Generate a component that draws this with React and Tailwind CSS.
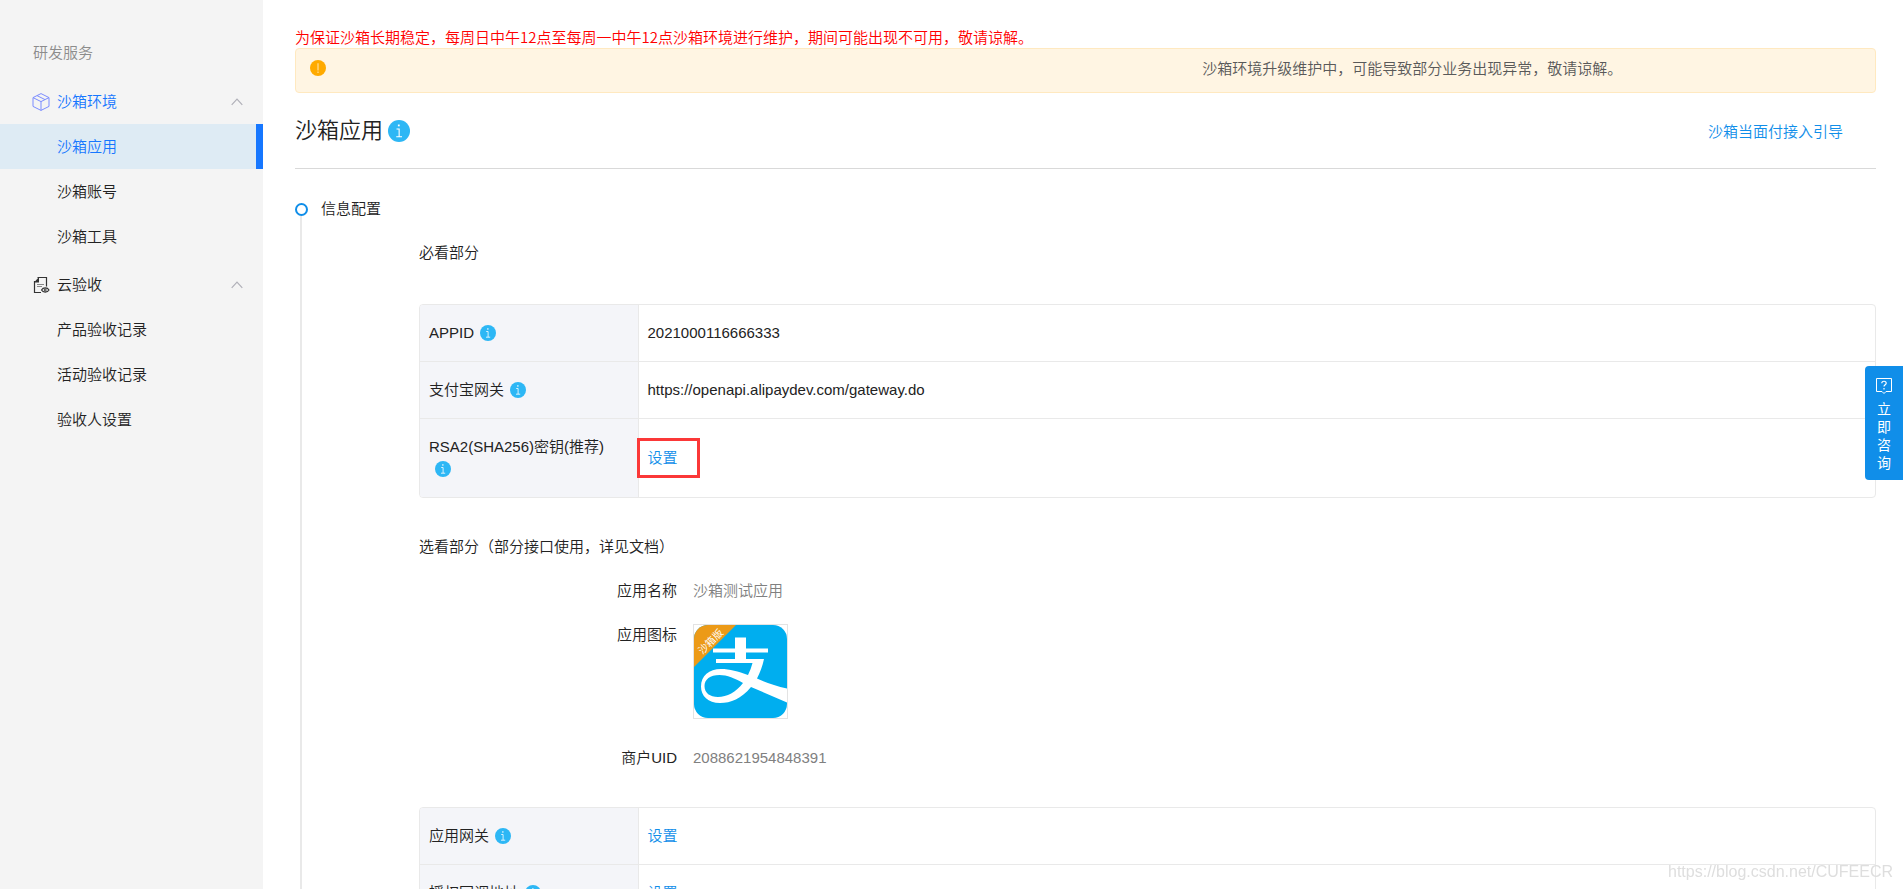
import React from "react";

const cx = (...names) => names.filter(Boolean).join(" ");

function InfoIcon({ className }) {
  return (
    <svg viewBox="0 0 16 16" className={className} aria-hidden="true">
      <circle cx="8" cy="8" r="8" fill="#2db7f5" />
      <rect x="7.2" y="3.3" width="1.3" height="1.3" fill="#fff" />
      <path d="M6.2 6.5h1.9v5.6M6 12.2h4.2" fill="none" stroke="#fff" strokeWidth="0.8" />
    </svg>
  );
}

function WarnIcon() {
  return (
    <svg viewBox="0 0 16 16" className="size-4 shrink-0" aria-hidden="true">
      <circle cx="8" cy="8" r="8" fill="#ffaa00" />
      <path d="M8 3.2v7.2M8 11.6v1.4" fill="none" stroke="#ffe3a8" strokeWidth="1.1" />
    </svg>
  );
}

function BoxIcon() {
  return (
    <svg viewBox="0 0 18 18" className="size-[18px]" fill="none" stroke="#7b8cff" strokeWidth="1" strokeLinejoin="round" aria-hidden="true">
      <path d="M9 0.6L17 4.6V13.4L9 17.4L1 13.4V4.6Z" />
      <path d="M1 4.6L9 8.6L17 4.6M9 8.6V17.4M5 2.6L13 6.6" />
    </svg>
  );
}

function FileIcon() {
  return (
    <svg viewBox="0 0 18 18" className="size-[18px]" fill="none" stroke="#333" aria-hidden="true">
      <path d="M5.500 1.500H14.500V10.500M9 16.500H2.500V5" strokeWidth="1.2" />
      <path d="M2 6.500L7 1V6.500Z" fill="#333" stroke="none" />
      <path d="M5 8.500H12M5 10.500H10" strokeWidth="1" stroke="#888" />
      <path d="M9.500 14C11 11.200 15.500 11.200 17 14C15.500 16.800 11 16.800 9.500 14Z" strokeWidth="1.1" />
      <circle cx="13.2" cy="14" r="1" strokeWidth="1" />
    </svg>
  );
}

function Chevron() {
  return (
    <svg viewBox="0 0 12 8" className="h-2 w-3" fill="none" stroke="#b0b0b8" strokeWidth="1.2" aria-hidden="true">
      <path d="M0.7 6.8L6 1.2L11.3 6.8" />
    </svg>
  );
}

const groups = [
  {
    title: "沙箱环境",
    icon: <BoxIcon />,
    active: true,
    items: [{ text: "沙箱应用", active: true }, { text: "沙箱账号" }, { text: "沙箱工具" }],
  },
  {
    title: "云验收",
    icon: <FileIcon />,
    items: [{ text: "产品验收记录" }, { text: "活动验收记录" }, { text: "验收人设置" }],
  },
];

function Sidebar() {
  return (
    <nav className="w-[263px] shrink-0 bg-[#f4f4f4] pt-[42px] text-[#222]">
      <h2 className="mb-[15px] pl-[33px] leading-[22px] text-[#8c8c8c]">研发服务</h2>
      {groups.map((g) => (
        <section key={g.title} className="mb-[3px]">
          <button
            type="button"
            aria-expanded="true"
            className={cx("flex h-[45px] w-full items-center pr-5 pl-8", g.active && "text-[#1677ff]")}
          >
            {g.icon}
            <span className="ml-[7px] flex-1 text-left">{g.title}</span>
            <Chevron />
          </button>
          <ul>
            {g.items.map((it) => (
              <li key={it.text}>
                <a
                  href="#"
                  className={cx(
                    "flex h-[45px] items-center pl-[57px]",
                    it.active && "border-r-7 border-[#1677ff] bg-[#deebf4] text-[#1677ff]"
                  )}
                >
                  {it.text}
                </a>
              </li>
            ))}
          </ul>
        </section>
      ))}
    </nav>
  );
}

function ConfigTable({ rows }) {
  return (
    <div className="overflow-hidden rounded border border-[#e9e9e9]">
      <table className="w-full border-collapse">
        <tbody>
          {rows.map((r) => (
            <tr key={r.label} className="border-b border-[#e9e9e9] last:border-b-0">
              <th scope="row" className="w-[218px] border-r border-[#e9e9e9] bg-[#f4f5f9] py-[17px] pr-4 pl-[9px] text-left font-[350]">
                {r.label}
                <InfoIcon className="mb-[3px] ml-[6px] inline size-4" />
              </th>
              <td className="relative px-[9px] py-[17px]">
                {r.value || (
                  <a href="#" className="text-[#108ee9]">
                    设置
                  </a>
                )}
                {r.marked && (
                  <span className="absolute top-1/2 -left-0.5 h-10 w-[63px] -translate-y-1/2 border-3 border-[#fb3838]" />
                )}
              </td>
            </tr>
          ))}
        </tbody>
      </table>
    </div>
  );
}

function AppLogo() {
  return (
    <svg viewBox="0 0 93 93" className="size-[93px]" role="img" aria-label="沙箱测试应用">
      <defs>
        <clipPath id="logo-clip">
          <rect width="93" height="93" rx="14" />
        </clipPath>
      </defs>
      <g clipPath="url(#logo-clip)">
        <rect width="93" height="93" fill="#00aeef" />
        <path d="M0 0H42L0 42Z" fill="#ec9a17" />
        <path
          fill="#fff"
          fillRule="evenodd"
          d="M41 12.500H52V23.500H74V27.500H52V34H70C68.500 41 66 47.500 63 53.500C72 57.500 82 61 93 63.500V77.500L57 62C47 74 37 78 26 78C14 78 7 71 7 61.500C7 51 15 44 27 44C36 44 44 46.500 54 50C56 46 57.500 42 58.500 38H22V34H41V27.500H19V23.500H41ZM49 58C41 53.500 33 50 25.500 50C16 50 10.500 54.500 10.500 61C10.500 68 16 72 24 72C33 72 42 67 49 58Z"
        />
      </g>
      <text x="17" y="20" transform="rotate(-45 17 17)" textAnchor="middle" fill="#fff" fontSize="10" fontWeight="400" fontFamily="'Noto Sans CJK SC', sans-serif">
        沙箱版
      </text>
    </svg>
  );
}

function Field({ label, children }) {
  return (
    <div className="flex gap-4">
      <dt className="w-[258px] shrink-0 text-right">{label}</dt>
      <dd className="text-[#808080]">{children}</dd>
    </div>
  );
}

export default function App() {
  return (
    <div className="flex h-screen overflow-hidden bg-white font-['Liberation_Sans','Noto_Sans_CJK_SC',sans-serif] text-[15px] leading-[22px] font-[350] text-[#222]">
      <Sidebar />
      <main className="min-w-0 flex-1 pt-[26px] pr-[27px] pl-8">
        <p className="font-['Noto_Sans_CJK_SC',sans-serif] text-[#ff0000]">
          为保证沙箱长期稳定，每周日中午12点至每周一中午12点沙箱环境进行维护，期间可能出现不可用，敬请谅解。
        </p>
        <div role="alert" className="flex h-[45px] rounded border border-[#ffe9c0] bg-[#fff5e3] px-[14px] pt-[11px]">
          <WarnIcon />
          <p className="-mt-0.5 ml-[56.5%] text-[#595959]">沙箱环境升级维护中，可能导致部分业务出现异常，敬请谅解。</p>
        </div>

        <header className="flex h-[76px] items-center justify-between border-b border-[#d9d9d9] pr-[33px]">
          <h1 className="flex items-center gap-[5px] text-[22px] leading-8">
            沙箱应用
            <InfoIcon className="size-[22px]" />
          </h1>
          <a href="#" className="pt-[3px] text-[#108ee9]">
            沙箱当面付接入引导
          </a>
        </header>

        <section className="pt-[29px]">
          <div className="flex items-center gap-[13px]">
            <span className="size-[13px] rounded-full border-2 border-[#108ee9]" />
            <h2>信息配置</h2>
          </div>
          <div className="-mt-1 ml-[5px] border-l-2 border-[#e9e9e9] pt-[26px] pl-[117px]">
            <h3 className="mb-10">必看部分</h3>
            <ConfigTable
              rows={[
                { label: "APPID", value: "2021000116666333" },
                { label: "支付宝网关", value: "https://openapi.alipaydev.com/gateway.do" },
                { label: "RSA2(SHA256)密钥(推荐)", marked: true },
              ]}
            />
            <h3 className="mt-[38px] mb-[22px]">选看部分（部分接口使用，详见文档）</h3>
            <dl className="mb-[38px] flex flex-col gap-[22px]">
              <Field label="应用名称">沙箱测试应用</Field>
              <Field label="应用图标">
                <div className="mb-[6px] border border-[#e3e3e3]">
                  <AppLogo />
                </div>
              </Field>
              <Field label="商户UID">2088621954848391</Field>
            </dl>
            <ConfigTable rows={[{ label: "应用网关" }, { label: "授权回调地址" }]} />
          </div>
        </section>
      </main>

      <button
        type="button"
        className="fixed top-[366px] right-0 flex w-[38px] flex-col items-center rounded-l bg-[#108ee9] pt-3 pb-2 text-[14px] leading-[18px] font-normal text-white"
      >
        <svg viewBox="0 0 16 16" className="mb-[6px] size-4" fill="none" stroke="#fff" aria-hidden="true">
          <path d="M0.500 0.500H15.500V13.500H10L8 15.500L6 13.500H0.500Z" />
          <path d="M5.800 5.200C5.800 2.600 10.200 2.600 10.200 5.200C10.200 6.800 8 6.700 8 8.600M8 10V11.400" strokeWidth="1.200" />
        </svg>
        <span>立</span>
        <span>即</span>
        <span>咨</span>
        <span>询</span>
      </button>

      <span className="fixed right-[10px] bottom-[6px] text-[16px] font-normal text-[#dedede]">
        https://blog.csdn.net/CUFEECR
      </span>
    </div>
  );
}
